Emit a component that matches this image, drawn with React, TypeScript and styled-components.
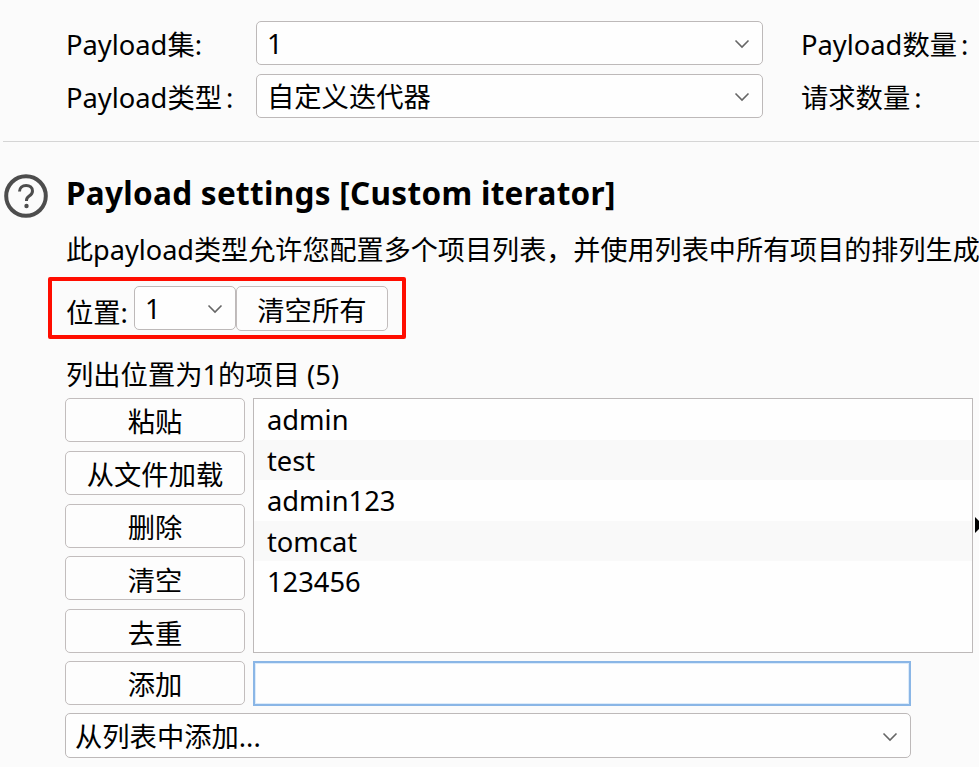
import styled, { createGlobalStyle } from "styled-components";

const GlobalStyle = createGlobalStyle`
	html, body {
		margin: 0;
		padding: 0;
		background: #fbfbfb;
		overflow: hidden;
	}
	body {
		font-family: "Noto Sans", "Noto Sans CJK SC", sans-serif;
		font-size: 27.3px;
		color: #000;
	}
`;

const Page = styled.div`
	position: relative;
	width: 979px;
	height: 767px;
	overflow: hidden;
	box-sizing: border-box;
	padding-top: 21px;
`;

const TopForm = styled.div`
	display: grid;
	grid-template-columns: 190px 507px auto;
	grid-auto-rows: 44px;
	row-gap: 9px;
	padding-left: 66px;
	align-items: center;
`;

const Label = styled.span`
	padding-bottom: 1px;
	white-space: nowrap;
`;

const SideLabel = styled(Label)`
	margin-left: 38px;
`;

// the CJK labels have a wider gap before the colon
const Colon = styled.span`
	margin-left: 4px;
`;

const Divider = styled.hr`
	margin: 23px 0 0 3px;
	border: 0;
	border-top: 1px solid #d5d5d5;
`;

const SettingsHead = styled.div`
	display: flex;
	align-items: center;
	gap: 18px;
	margin: 32px 0 0 4px;
	height: 44px;
`;

const Title = styled.h2`
	margin: 0 0 6px;
	font-size: 31.5px;
	font-weight: 700;
	line-height: 44px;
	letter-spacing: 0.3px;
	white-space: nowrap;
`;

const Description = styled.p`
	margin: 10px 0 0 66px;
	font-size: 27.1px;
	line-height: 44px;
	white-space: nowrap;
`;

const PositionBox = styled.div`
	display: flex;
	align-items: center;
	width: 358px;
	height: 62px;
	box-sizing: border-box;
	margin: 5px 0 0 48px;
	padding-left: 14px;
	border: 4px solid #ff0d00;
	border-radius: 2px;
`;

const SelectBox = styled.div<{ $width: number }>`
	display: flex;
	align-items: center;
	justify-content: space-between;
	box-sizing: border-box;
	width: ${(p) => p.$width}px;
	height: 44px;
	padding: 2px 12px 0 10px;
	background: #fefefe;
	border: 1.5px solid #bdb9b9;
	border-radius: 5px;
	line-height: 1;
`;

const TallSelect = styled(SelectBox)`
	height: 45px;
	padding-left: 9px;
`;

const PositionLabel = styled.span`
	margin-right: 6px;
	padding-top: 5px;
	white-space: nowrap;
`;

const Button = styled.button<{ $width?: number }>`
	display: block;
	box-sizing: border-box;
	width: ${(p) => p.$width ?? 180}px;
	height: 44px;
	padding: 4px 0 0;
	background: #fdfdfd;
	border: 1.5px solid #c2bdbd;
	border-radius: 5px;
	font: inherit;
	color: inherit;
	line-height: 1;
`;

const ClearAll = styled(Button)`
	height: 45px;
	padding-top: 6px;
`;

const ListCaption = styled.div`
	margin: 14px 0 0 66px;
	line-height: 44px;
	height: 44px;
	white-space: nowrap;
`;

const Editor = styled.div`
	display: flex;
	flex-direction: column;
	gap: 7.6px;
	margin: 1px 0 0 65px;
`;

const ListRow = styled.div`
	display: flex;
	gap: 8px;
`;

const ButtonColumn = styled.div`
	display: flex;
	flex-direction: column;
	gap: 8.8px;
`;

const ItemList = styled.ul`
	box-sizing: border-box;
	width: 720px;
	margin: 0;
	padding: 0;
	list-style: none;
	background: #fefefe;
	border: 1.5px solid #bdb9b9;
`;

const Item = styled.li<{ $odd: boolean }>`
	height: 40.5px;
	line-height: 41px;
	padding-left: 13px;
	background: ${(p) => (p.$odd ? "#f9f9f9" : "transparent")};
`;

const AddRow = styled.div`
	display: flex;
	gap: 8px;
`;

const AddInput = styled.input`
	box-sizing: border-box;
	width: 658px;
	height: 45px;
	background: #fefefe;
	border: 2px solid #8ab6e6;
	box-shadow: inset 0 0 0 1px #dcebfa;
	outline: none;
	font: inherit;
	padding: 0 12px;
`;

const Splitter = styled.div`
	position: absolute;
	left: 975px;
	top: 517px;
	width: 0;
	height: 0;
	border-top: 8px solid transparent;
	border-bottom: 8px solid transparent;
	border-left: 8px solid #000;
`;

const Chevron = () => (
	<svg width="16" height="10" viewBox="0 0 16 10" fill="none">
		<path d="M1.5 1.5 8 8l6.5-6.5" stroke="#666" strokeWidth="1.6" />
	</svg>
);

const HelpIcon = () => (
	<svg width="44" height="44" viewBox="0 0 44 44" fill="none">
		<circle cx="22" cy="22" r="19.8" stroke="#4d4d4d" strokeWidth="4" />
		<path
			d="M15.500 17.500c0-3.800 2.900-6 6.600-6 3.800 0 6.400 2.200 6.400 5.400 0 2.600-1.500 3.900-3.300 5.100-1.700 1.100-2.700 2-2.700 4.200v.8"
			stroke="#4d4d4d"
			strokeWidth="3"
		/>
		<circle cx="22.500" cy="32" r="2.200" fill="#4d4d4d" />
	</svg>
);

const sideButtons = ["粘贴", "从文件加载", "删除", "清空", "去重"];
const items = ["admin", "test", "admin123", "tomcat", "123456"];
const COMMA = "\uFF0C";

export default function App() {
	return (
		<Page>
			<GlobalStyle />
			<TopForm>
				<Label>Payload集:</Label>
				<SelectBox $width={507}>
					1
					<Chevron />
				</SelectBox>
				<SideLabel>
					Payload数量<Colon>:</Colon>
				</SideLabel>
				<Label>
					Payload类型<Colon>:</Colon>
				</Label>
				<SelectBox $width={507}>
					自定义迭代器
					<Chevron />
				</SelectBox>
				<SideLabel>
					请求数量<Colon>:</Colon>
				</SideLabel>
			</TopForm>
			<Divider />
			<SettingsHead>
				<HelpIcon />
				<Title>Payload settings [Custom iterator]</Title>
			</SettingsHead>
			<Description>此payload类型允许您配置多个项目列表{COMMA}并使用列表中所有项目的排列生成</Description>
			<PositionBox>
				<PositionLabel>位置:</PositionLabel>
				<SelectBox $width={102}>
					1
					<Chevron />
				</SelectBox>
				<ClearAll $width={152}>清空所有</ClearAll>
			</PositionBox>
			<ListCaption>列出位置为1的项目 (5)</ListCaption>
			<Editor>
				<ListRow>
					<ButtonColumn>
						{sideButtons.map((label) => (
							<Button key={label}>{label}</Button>
						))}
					</ButtonColumn>
					<ItemList>
						{items.map((item, i) => (
							<Item key={item} $odd={i % 2 === 1}>
								{item}
							</Item>
						))}
					</ItemList>
				</ListRow>
				<AddRow>
					<Button>添加</Button>
					<AddInput />
				</AddRow>
				<TallSelect $width={846}>
					从列表中添加...
					<Chevron />
				</TallSelect>
			</Editor>
			<Splitter />
		</Page>
	);
}
